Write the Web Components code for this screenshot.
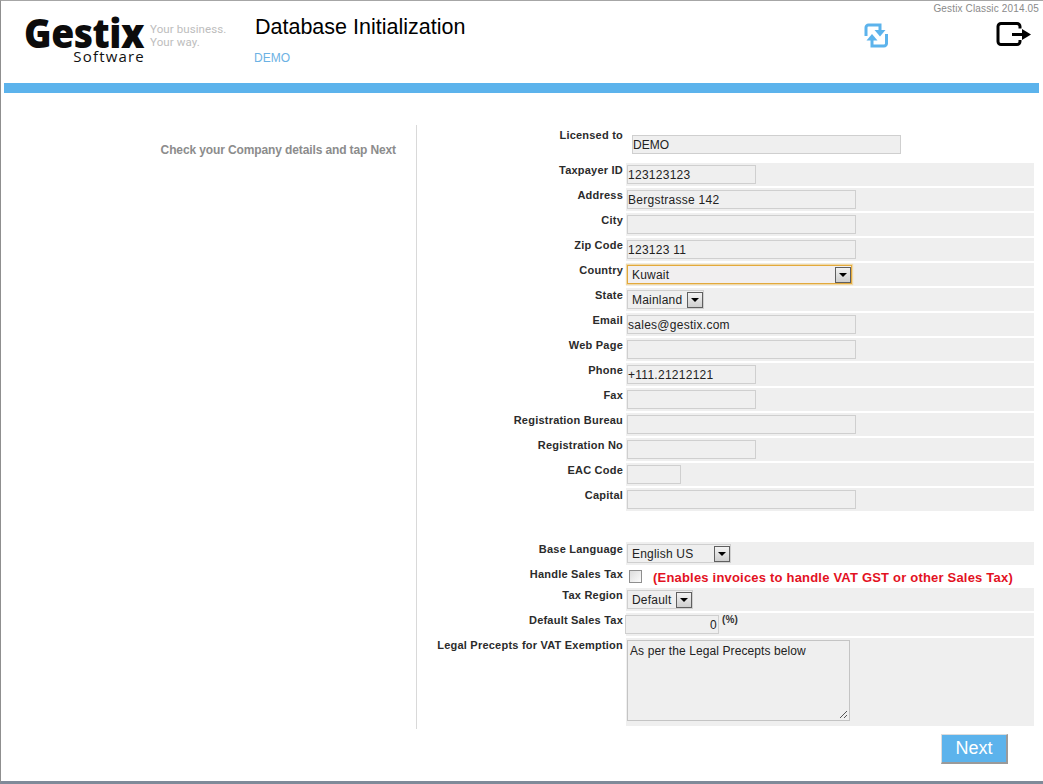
<!DOCTYPE html>
<html>
<head>
<meta charset="utf-8">
<title>Gestix</title>
<style>
html, body { margin: 0; padding: 0; background: #fff; }
body { font-family: "Liberation Sans", Arial, sans-serif; }
</style>
</head>
<body>
<gx-app>
  <gx-header slot="header" title-text="Database Initialization" company="DEMO" version="Gestix Classic 2014.05"></gx-header>
  <gx-form-page hint="Check your Company details and tap Next">
    <gx-licence label="Licensed to">DEMO</gx-licence>
    <gx-field label="Taxpayer ID"><gx-input width="129">123123123</gx-input></gx-field>
    <gx-field label="Address"><gx-input width="229">Bergstrasse 142</gx-input></gx-field>
    <gx-field label="City"><gx-input width="229"></gx-input></gx-field>
    <gx-field label="Zip Code"><gx-input width="229">123123 11</gx-input></gx-field>
    <gx-field label="Country"><gx-select width="225" focused>Kuwait</gx-select></gx-field>
    <gx-field label="State"><gx-select width="77">Mainland</gx-select></gx-field>
    <gx-field label="Email"><gx-input width="229">sales@gestix.com</gx-input></gx-field>
    <gx-field label="Web Page"><gx-input width="229"></gx-input></gx-field>
    <gx-field label="Phone"><gx-input width="129">+111.21212121</gx-input></gx-field>
    <gx-field label="Fax"><gx-input width="129"></gx-input></gx-field>
    <gx-field label="Registration Bureau"><gx-input width="229"></gx-input></gx-field>
    <gx-field label="Registration No"><gx-input width="129"></gx-input></gx-field>
    <gx-field label="EAC Code"><gx-input width="54"></gx-input></gx-field>
    <gx-field label="Capital"><gx-input width="229"></gx-input></gx-field>
    <gx-spacer></gx-spacer>
    <gx-field label="Base Language"><gx-select width="104">English US</gx-select></gx-field>
    <gx-field label="Handle Sales Tax" compact><gx-check>(Enables invoices to handle VAT GST or other Sales Tax)</gx-check></gx-field>
    <gx-field label="Tax Region"><gx-select width="66">Default</gx-select></gx-field>
    <gx-field label="Default Sales Tax"><gx-input width="94" align="right">0</gx-input><gx-unit>(%)</gx-unit></gx-field>
    <gx-field label="Legal Precepts for VAT Exemption" tall><gx-textarea>As per the Legal Precepts below</gx-textarea></gx-field>
    <gx-button slot="actions">Next</gx-button>
  </gx-form-page>
</gx-app>

<script>
const FONT = `"Liberation Sans", Arial, sans-serif`;

customElements.define(
  "gx-app",
  class extends HTMLElement {
    constructor() {
      super();
      this.attachShadow({ mode: "open" }).innerHTML = `
<style>
:host {
  display: flex;
  flex-direction: column;
  box-sizing: border-box;
  width: 1043px;
  height: 784px;
  overflow: hidden;
  background: #fff;
  border-top: 1px solid #a6a6a6;
  border-left: 1px solid #8f8f8f;
  border-bottom: 3px solid #7f8a99;
  font-family: ${FONT};
}
</style>
<slot name="header"></slot>
<slot></slot>`;
    }
  }
);

customElements.define(
  "gx-header",
  class extends HTMLElement {
    constructor() {
      super();
      this.attachShadow({ mode: "open" }).innerHTML = `
<style>
:host { display: block; height: 92px; }
.top { display: flex; height: 82px; position: relative; }
.logo { width: 253px; flex: none; padding: 14px 0 0 23px; box-sizing: border-box; display: flex; }
.brand { width: 121px; display: flex; flex-direction: column; align-items: flex-end; }
.gestix { align-self: flex-start; font: 800 41px/34px "Open Sans", sans-serif; color: #0c0c0c; letter-spacing: -0.5px; transform: scaleX(0.91); transform-origin: left center; }
.software { font: 400 15px/14px "Open Sans", sans-serif; color: #111; letter-spacing: 1.2px; }
.tag { font: 400 11.500px/13px Roboto, sans-serif; color: #bdbdbd; letter-spacing: 0.1px; margin: 8px 0 0 5px; white-space: nowrap; }
.titles { flex: 1; padding-top: 14px; }
h1 { margin: 0 0 0 1px; font: 400 21.500px/25px ${FONT}; color: #000; }
.company { margin-top: 11px; font: 400 12px/14px ${FONT}; color: #6cb2e4; }
.icons { display: flex; width: 169px; flex: none; margin-right: 11px; justify-content: space-between; padding-top: 21px; box-sizing: border-box; }
svg { display: block; }
.version { position: absolute; top: 2px; right: 4px; font: 400 10px/12px ${FONT}; letter-spacing: 0.15px; color: #8a8a8a; }
.bar { height: 10px; margin: 0 4px 0 3px; background: #5cb3ec; }
</style>
<div class="top">
  <div class="logo">
    <div class="brand"><span class="gestix">Gestix</span><span class="software">Software</span></div>
    <div class="tag">Your business.<br>Your way.</div>
  </div>
  <div class="titles"><h1 id="title"></h1><div class="company" id="company"></div></div>
  <div class="icons">
    <svg width="26" height="26" viewBox="0 0 26 26" fill="none">
      <path d="M3 14V5.500a2.500 2.500 0 0 1 2.500-2.500H17V9" stroke="#5cb3ec" stroke-width="3"/>
      <path d="M11.500 8H22.500L17 14.500z" fill="#5cb3ec"/>
      <path d="M23.500 12V21.500a2.500 2.500 0 0 1-2.500 2.500H9V18" stroke="#5cb3ec" stroke-width="3"/>
      <path d="M3.500 18.500H14.500L9 12z" fill="#5cb3ec"/>
    </svg>
    <svg width="36" height="25" viewBox="0 0 36 25" fill="none">
      <path d="M24 6.500V4.500a3 3 0 0 0-3-3H5a3 3 0 0 0-3 3v15a3 3 0 0 0 3 3h16a3 3 0 0 0 3-3v-1.500" stroke="#000" stroke-width="3"/>
      <path d="M16 12.500h11" stroke="#000" stroke-width="3"/>
      <path d="M26 7l9 5.500-9 5.500z" fill="#000"/>
    </svg>
  </div>
  <div class="version" id="version"></div>
</div>
<div class="bar"></div>`;
    }

    connectedCallback() {
      this.shadowRoot.getElementById("title").textContent = this.getAttribute("title-text");
      this.shadowRoot.getElementById("company").textContent = this.getAttribute("company");
      this.shadowRoot.getElementById("version").textContent = this.getAttribute("version");
    }
  }
);

customElements.define(
  "gx-form-page",
  class extends HTMLElement {
    constructor() {
      super();
      this.attachShadow({ mode: "open" }).innerHTML = `
<style>
:host { display: flex; padding-top: 32px; }
.hint { box-sizing: border-box; width: 416px; height: 604px; flex: none; border-right: 1px solid #d9d9d9; padding: 18px 20px 0 0; text-align: right; font: 700 12px/14px ${FONT}; letter-spacing: -0.12px; color: #8c8c8c; }
.form { width: 617px; display: flex; flex-direction: column; }
.actions { display: flex; justify-content: flex-end; padding: 6px 26px 0 0; }
</style>
<div class="hint" id="hint"></div>
<div class="form"><slot></slot><div class="actions"><slot name="actions"></slot></div></div>`;
    }

    connectedCallback() {
      this.shadowRoot.getElementById("hint").textContent = this.getAttribute("hint");
    }
  }
);

const LABEL_STYLE = `
.label { width: 206px; flex: none; box-sizing: border-box; text-align: right; font: 700 11px/14px ${FONT}; letter-spacing: 0.22px; color: #2b2b2b; white-space: nowrap; display: flex; justify-content: flex-end; }
`;

customElements.define(
  "gx-licence",
  class extends HTMLElement {
    constructor() {
      super();
      this.attachShadow({ mode: "open" }).innerHTML = `
<style>
${LABEL_STYLE}
:host { display: flex; height: 38px; }
.label { padding-top: 3px; }
.box { box-sizing: border-box; width: 269px; height: 19px; margin: 10px 0 0 9px; padding-left: 0; background: #efefef; border: 1px solid #cfcfcf; font: 400 12px/18px ${FONT}; color: #222; }
</style>
<div class="label" id="label"></div><div class="box"><slot></slot></div>`;
    }

    connectedCallback() {
      this.shadowRoot.getElementById("label").textContent = this.getAttribute("label");
    }
  }
);

customElements.define(
  "gx-field",
  class extends HTMLElement {
    constructor() {
      super();
      this.attachShadow({ mode: "open" }).innerHTML = `
<style>
${LABEL_STYLE}
:host { display: flex; height: 25px; }
:host([compact]) { height: 21px; }
:host([tall]) { height: 90px; }
.cell { display: flex; align-items: flex-start; width: 408px; height: 23px; margin-left: 3px; background: #efefef; padding-left: 1px; box-sizing: border-box; }
:host([compact]) .cell { height: 19px; background: #fff; }
:host([tall]) .cell { height: 88px; }
</style>
<div class="label" id="label"></div><div class="cell"><slot></slot></div>`;
    }

    connectedCallback() {
      this.shadowRoot.getElementById("label").textContent = this.getAttribute("label");
    }
  }
);

customElements.define(
  "gx-input",
  class extends HTMLElement {
    constructor() {
      super();
      this.attachShadow({ mode: "open" }).innerHTML = `
<style>
:host { display: block; box-sizing: border-box; height: 19px; margin-top: 2px; padding: 0 1px 0 0; background: #efefef; border: 1px solid #cfcfcf; font: 400 12px/18px ${FONT}; letter-spacing: 0.27px; color: #222; }
:host([align="right"]) { text-align: right; margin-left: -2px; }
</style>
<slot></slot>`;
    }

    connectedCallback() {
      this.style.width = `${this.getAttribute("width")}px`;
    }
  }
);

customElements.define(
  "gx-select",
  class extends HTMLElement {
    constructor() {
      super();
      this.attachShadow({ mode: "open" }).innerHTML = `
<style>
:host { display: flex; align-items: center; justify-content: space-between; box-sizing: border-box; height: 19px; margin-top: 2px; padding: 0 0 0 4px; border: 1px solid #cfcfcf; background: #efefef; font: 400 12px/16px ${FONT}; letter-spacing: 0.2px; color: #222; }
:host([focused]) { border: 1px solid #e2a93c; box-shadow: 0 0 1px 1px #f0d9a8; background: #f1eff0; }
.arrow { box-sizing: border-box; width: 16px; height: 16px; flex: none; border: 1px solid #5f5f5f; background: linear-gradient(#f2f2f2, #cfcfcf); display: flex; align-items: center; justify-content: center; }
.arrow::before { content: ""; border: 4px solid transparent; border-top: 4px solid #000; border-bottom: 0; }
</style>
<slot></slot><span class="arrow"></span>`;
    }

    connectedCallback() {
      this.style.width = `${this.getAttribute("width")}px`;
    }
  }
);

customElements.define(
  "gx-check",
  class extends HTMLElement {
    constructor() {
      super();
      this.attachShadow({ mode: "open" }).innerHTML = `
<style>
:host { display: flex; align-items: center; height: 19px; background: #fff; }
.box { box-sizing: border-box; width: 13px; height: 13px; margin-left: 2px; border: 1px solid #8e8e8e; background: linear-gradient(135deg, #dcdcdc, #fbfbfb); }
.note { margin: 2px 0 0 11px; font: 700 13px/16px ${FONT}; letter-spacing: 0.2px; color: #e3121f; white-space: nowrap; }
</style>
<span class="box"></span><span class="note"><slot></slot></span>`;
    }
  }
);

customElements.define(
  "gx-unit",
  class extends HTMLElement {
    constructor() {
      super();
      this.attachShadow({ mode: "open" }).innerHTML = `
<style>
:host { display: block; margin-left: 3px; font: 700 10px/14px ${FONT}; letter-spacing: 0.2px; color: #333; }
</style>
<slot></slot>`;
    }
  }
);

customElements.define(
  "gx-textarea",
  class extends HTMLElement {
    constructor() {
      super();
      this.attachShadow({ mode: "open" }).innerHTML = `
<style>
:host { display: block; position: relative; box-sizing: border-box; width: 223px; height: 81px; margin-top: 2px; padding: 3px 2px; border: 1px solid #c4c4c4; background: #efefef; font: 400 12px/14px ${FONT}; letter-spacing: 0.1px; color: #222; }
svg { position: absolute; right: 1px; bottom: 1px; }
</style>
<slot></slot>
<svg width="9" height="9" viewBox="0 0 9 9"><path d="M8 1L1 8M8 5L5 8" stroke="#555" fill="none"/></svg>`;
    }
  }
);

customElements.define(
  "gx-spacer",
  class extends HTMLElement {
    constructor() {
      super();
      this.attachShadow({ mode: "open" }).innerHTML = `
<style>:host { display: block; height: 29px; }</style>`;
    }
  }
);

customElements.define(
  "gx-button",
  class extends HTMLElement {
    constructor() {
      super();
      this.attachShadow({ mode: "open" }).innerHTML = `
<style>
:host { display: block; box-sizing: border-box; width: 67px; height: 30px; background: #5cb3ec; border: 1px solid #dcdcdc; border-right: 2px solid #9a9a9a; border-bottom: 2px solid #9a9a9a; color: #fff; text-align: center; font: 400 18px/27px ${FONT}; }
</style>
<slot></slot>`;
    }
  }
);
</script>
</body>
</html>
